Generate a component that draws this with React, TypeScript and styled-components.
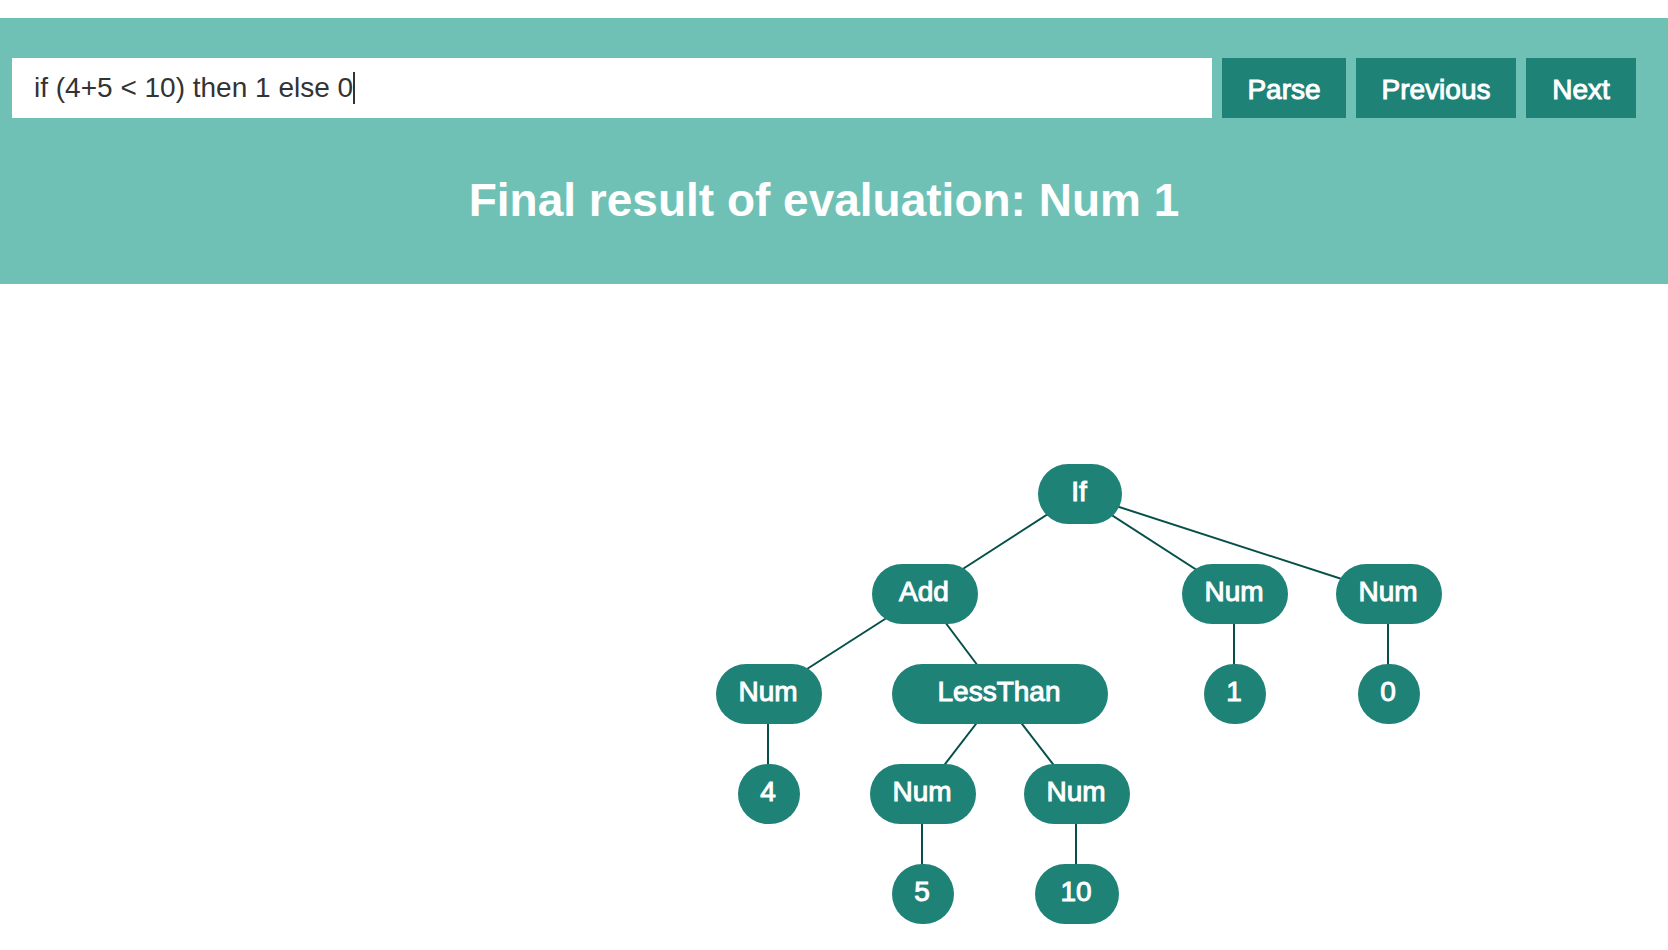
import React, { useLayoutEffect, useRef, useState } from "react";
import styled, { createGlobalStyle } from "styled-components";

const colors = {
  band: "#70c1b5",
  accent: "#1e8277",
  edge: "#06504a",
  ink: "#333333",
};

const GlobalStyle = createGlobalStyle`
  * { box-sizing: border-box; }
  body {
    margin: 0;
    background: #ffffff;
    font-family: "Liberation Sans", Helvetica, Arial, sans-serif;
    font-size: 28px;
  }
`;

const Page = styled.main`
  padding-top: 18px;
`;

const Header = styled.header`
  background: ${colors.band};
  padding: 40px 32px 56px 12px;
`;

const Toolbar = styled.form`
  display: flex;
  gap: 10px;
  height: 60px;
`;

const Field = styled.div`
  position: relative;
  flex: 1;
  min-width: 0;
`;

const ExpressionInput = styled.input`
  display: block;
  width: 100%;
  height: 60px;
  padding: 0 22px;
  border: 0;
  border-radius: 0;
  outline: 0;
  background: #ffffff;
  color: ${colors.ink};
  font: inherit;
  caret-color: transparent;
`;

const Caret = styled.span`
  position: absolute;
  top: 14px;
  left: 22px;
  width: 2px;
  height: 32px;
  background: ${colors.ink};
  pointer-events: none;
`;

const ActionButton = styled.button<{ $width: number }>`
  width: ${(p) => p.$width}px;
  height: 60px;
  padding: 4px 0 0;
  border: 0;
  border-radius: 0;
  background: ${colors.accent};
  color: #ffffff;
  font: inherit;
  -webkit-text-stroke: 1px #ffffff;
  cursor: pointer;
`;

const Result = styled.h1`
  margin: 54px 0 0;
  color: #ffffff;
  font-size: 46px;
  line-height: 56px;
  font-weight: 700;
  text-align: center;
`;

const Canvas = styled.svg`
  display: block;
  width: 100%;
  height: 660px;
`;

const Edge = styled.line`
  stroke: ${colors.edge};
  stroke-width: 2px;
`;

const NodeShape = styled.rect`
  fill: ${colors.accent};
`;

const NodeLabel = styled.text`
  fill: #ffffff;
  stroke: #ffffff;
  stroke-width: 1px;
  font-size: 28px;
  text-anchor: middle;
`;

type TreeNode = { label: string; x: number; children?: TreeNode[] };

const tree: TreeNode = {
  label: "If",
  x: 1080,
  children: [
    {
      label: "Add",
      x: 925,
      children: [
        { label: "Num", x: 769, children: [{ label: "4", x: 769 }] },
        {
          label: "LessThan",
          x: 1000,
          children: [
            { label: "Num", x: 923, children: [{ label: "5", x: 923 }] },
            { label: "Num", x: 1077, children: [{ label: "10", x: 1077 }] },
          ],
        },
      ],
    },
    { label: "Num", x: 1235, children: [{ label: "1", x: 1235 }] },
    { label: "Num", x: 1389, children: [{ label: "0", x: 1389 }] },
  ],
};

const NODE_HEIGHT = 60;
const LEVEL_HEIGHT = 100;
const TREE_TOP = 180;

const nodeWidth = (label: string) => 40 + 22 * label.length;
const nodeTop = (depth: number) => TREE_TOP + depth * LEVEL_HEIGHT;
const nodeMiddle = (depth: number) => nodeTop(depth) + NODE_HEIGHT / 2;

function Branch({ node, depth = 0 }: { node: TreeNode; depth?: number }) {
  const width = nodeWidth(node.label);
  const children = node.children ?? [];
  return (
    <g>
      {children.map((child, i) => (
        <Edge
          key={i}
          x1={node.x - 1}
          y1={nodeMiddle(depth)}
          x2={child.x - 1}
          y2={nodeMiddle(depth + 1)}
        />
      ))}
      {children.map((child, i) => (
        <Branch key={i} node={child} depth={depth + 1} />
      ))}
      <NodeShape
        x={node.x - width / 2}
        y={nodeTop(depth)}
        width={width}
        height={NODE_HEIGHT}
        rx={30}
      />
      <NodeLabel x={node.x - 1} y={nodeTop(depth) + 37}>
        {node.label}
      </NodeLabel>
    </g>
  );
}

export default function App() {
  const [source, setSource] = useState("if (4+5 < 10) then 1 else 0");
  const [caretShift, setCaretShift] = useState(0);
  const inputRef = useRef<HTMLInputElement>(null);

  useLayoutEffect(() => {
    const context = document.createElement("canvas").getContext("2d");
    if (!context || !inputRef.current) return;
    context.font = getComputedStyle(inputRef.current).font;
    setCaretShift(Math.round(context.measureText(source).width));
  }, [source]);

  return (
    <>
      <GlobalStyle />
      <Page>
        <Header>
          <Toolbar onSubmit={(e) => e.preventDefault()}>
            <Field>
              <ExpressionInput
                ref={inputRef}
                type="text"
                aria-label="Expression"
                spellCheck={false}
                value={source}
                onChange={(e) => setSource(e.target.value)}
              />
              <Caret style={{ transform: `translateX(${caretShift}px)` }} />
            </Field>
            <ActionButton type="submit" $width={124}>Parse</ActionButton>
            <ActionButton type="button" $width={160}>Previous</ActionButton>
            <ActionButton type="button" $width={110}>Next</ActionButton>
          </Toolbar>
          <Result>Final result of evaluation: Num 1</Result>
        </Header>
        <Canvas role="img" aria-label="Syntax tree">
          <Branch node={tree} />
        </Canvas>
      </Page>
    </>
  );
}
